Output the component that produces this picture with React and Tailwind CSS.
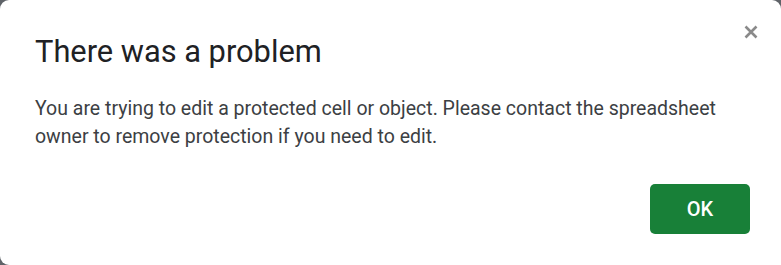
export default function App() {
  return (
    <div className="w-[781px] h-[265px] bg-[#5f6368] overflow-hidden" style={{ fontFamily: "Roboto, 'Liberation Sans', sans-serif" }}>
      <div className="relative w-full h-full bg-white rounded-tl-[9px] rounded-tr-[9px] rounded-bl-[9px] pl-[35px] pr-[30px] pt-[32px] flex flex-col">
        <button className="absolute right-[22px] top-[24px] w-[16px] h-[16px] flex items-center justify-center">
          <svg width="14" height="14" viewBox="0 0 14 14">
            <path d="M1.5 1.5 L12.5 12.5 M12.5 1.5 L1.5 12.5" stroke="#8a8a8a" strokeWidth="2.6" strokeLinecap="butt" />
          </svg>
        </button>
        <h1 className="text-[30.8px] leading-[40px] text-[#202124] font-normal">There was a problem</h1>
        <p className="mt-[23px] text-[19.5px] leading-[28px] text-[#3c4043] whitespace-nowrap">
          You are trying to edit a protected cell or object. Please contact the spreadsheet
          <br />
          owner to remove protection if you need to edit.
        </p>
        <div className="flex justify-end mt-[33px] pr-[1px]">
          <button className="w-[100px] h-[50px] bg-[#188038] rounded-[5px] text-white text-[20px] font-medium">OK</button>
        </div>
      </div>
    </div>
  );
}
